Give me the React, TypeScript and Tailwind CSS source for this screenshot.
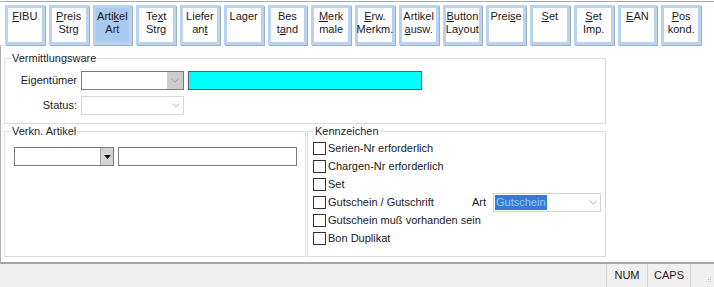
import React from 'react'

interface ToolButton {
  lines: React.ReactNode[]
  active?: boolean
}

const U = ({ c }: { c: string }) => <span className="underline underline-offset-[1px]">{c}</span>

const buttons: ToolButton[] = [
  { lines: [<><U c="F" />IBU</>] },
  { lines: [<><U c="P" />reis</>, 'Strg'] },
  { lines: [<>Arti<U c="k" />el</>, 'Art'], active: true },
  { lines: [<>Te<U c="x" />t</>, 'Strg'] },
  { lines: ['Liefer', <>an<U c="t" /></>] },
  { lines: ['Lager'] },
  { lines: ['Bes', <>t<U c="a" />nd</>] },
  { lines: [<><U c="M" />erk</>, 'male'] },
  { lines: [<><U c="E" />rw.</>, 'Merkm.'] },
  { lines: ['Artikel', <><U c="a" />usw.</>] },
  { lines: [<><U c="B" />utton</>, 'Layout'] },
  { lines: [<>Prei<U c="s" />e</>] },
  { lines: [<><U c="S" />et</>] },
  { lines: [<><U c="S" />et</>, 'Imp.'] },
  { lines: [<><U c="E" />AN</>] },
  { lines: [<><U c="P" />os</>, 'kond.'] },
]

const Chevron = ({ color }: { color: string }) => (
  <svg width="8" height="5" viewBox="0 0 8 5">
    <path d="M0.5 0.5 L4 4 L7.5 0.5" fill="none" stroke={color} strokeWidth="1" />
  </svg>
)

const GroupBox = ({ title, className, children }: { title: string; className: string; children?: React.ReactNode }) => (
  <div className={`relative border border-[#dcdcdc] ${className}`}>
    <span className="absolute -top-[8px] left-[6px] bg-white px-[1px] leading-[14px] text-[#1e1e1e]">{title}</span>
    {children}
  </div>
)

const checks = [
  'Serien-Nr erforderlich',
  'Chargen-Nr erforderlich',
  'Set',
  'Gutschein / Gutschrift',
  'Gutschein muß vorhanden sein',
  'Bon Duplikat',
]

const App = () => {
  return (
    <div className="w-[714px] h-[287px] bg-white flex flex-col text-[11px] text-[#1a1a1a] font-['Liberation_Sans',Arial,sans-serif] overflow-hidden">
      <div className="mt-[1px] border-t border-[#a8a8a8]" />
      <div className="w-[701px] pl-[5px] pt-[3px] grid grid-cols-[repeat(16,minmax(0,1fr))] gap-[4px]">
        {buttons.map((b, i) => (
          <div
            key={i}
            className={`h-[40px] border-[3px] border-[#b7d3f1] shadow-[1px_1px_0_#9fb1c5] flex flex-col items-center pt-[2px] leading-[13px] text-[11px] ${b.active ? 'bg-[#a9c9ee]' : 'bg-white'}`}
          >
            {b.lines.map((l, j) => (
              <span key={j}>{l}</span>
            ))}
          </div>
        ))}
      </div>

      <div className="flex-1 border-l border-[#b0b0b0] pl-[3px] pt-[13px]">
        <GroupBox title="Vermittlungsware" className="w-[602px] h-[66px] pt-[12px]">
          <div className="flex items-center h-[19px]">
            <span className="w-[72px] text-right">Eigentümer</span>
            <div className="ml-[4px] w-[103px] h-[19px] border border-[#7a7a7a] flex bg-white">
              <div className="flex-1" />
              <div className="w-[16px] bg-[#cccccc] flex items-center justify-center">
                <Chevron color="#a8a8a8" />
              </div>
            </div>
            <div className="ml-[4px] w-[234px] h-[19px] border border-[#5f5f5f] bg-[#00ffff]" />
          </div>
          <div className="flex items-center h-[19px] mt-[6px]">
            <span className="w-[72px] text-right">Status:</span>
            <div className="ml-[4px] w-[103px] h-[19px] border border-[#d9d9d9] flex items-center justify-end pr-[3px]">
              <Chevron color="#b5b5b5" />
            </div>
          </div>
        </GroupBox>

        <div className="flex gap-[1px] mt-[7px]">
          <GroupBox title="Verkn. Artikel" className="w-[302px] h-[126px] pt-[15px] pl-[9px]">
            <div className="flex gap-[4px]">
              <div className="w-[100px] h-[19px] border border-[#7a7a7a] flex bg-white">
                <div className="flex-1" />
                <div className="w-[13px] bg-[#d4d4d4] border-l border-[#a0a0a0] flex items-center justify-center">
                  <svg width="7" height="4" viewBox="0 0 7 4">
                    <path d="M0 0 H7 L3.5 4 Z" fill="#111" />
                  </svg>
                </div>
              </div>
              <div className="w-[179px] h-[19px] border border-[#7a7a7a] bg-white" />
            </div>
          </GroupBox>

          <GroupBox title="Kennzeichen" className="w-[299px] h-[126px] pt-[7px] pl-[5px]">
            <div className="flex flex-col">
              {checks.map((c, i) => (
                <div key={i} className="h-[18px] flex items-center">
                  <div className={`flex items-center ${i === 3 ? 'w-[159px]' : ''}`}>
                    <div className="w-[13px] h-[13px] border border-[#333333] bg-white" />
                    <span className="ml-[2px]">{c}</span>
                  </div>
                  {i === 3 && (
                    <>
                      <span className="w-[21px]">Art</span>
                      <div className="w-[108px] h-[19px] border border-[#d4d4d4] flex items-center pl-[1px] pr-[3px]">
                        <span className="bg-[#2f7fd8] text-[#9cc3ee] px-[1px] leading-[15px]">Gutschein</span>
                        <div className="flex-1" />
                        <Chevron color="#b5b5b5" />
                      </div>
                    </>
                  )}
                </div>
              ))}
            </div>
          </GroupBox>
        </div>
      </div>

      <div className="h-[25px] border-t-2 border-[#a6a6a6] bg-[#f0f0f0] flex">
        <div className="flex-1" />
        <div className="w-[41px] border-l border-[#d6d6d6] flex items-center justify-center">NUM</div>
        <div className="w-[43px] border-l border-[#d6d6d6] flex items-center justify-center">CAPS</div>
        <div className="w-[24px] border-l border-[#d6d6d6] flex items-end justify-end p-[2px]">
          <svg width="10" height="10" viewBox="0 0 10 10">
            <g fill="#c4c4c4">
              <rect x="8" y="2" width="1" height="1" />
              <rect x="6" y="4" width="1" height="1" />
              <rect x="8" y="4" width="1" height="1" />
              <rect x="4" y="6" width="1" height="1" />
              <rect x="6" y="6" width="1" height="1" />
              <rect x="8" y="6" width="1" height="1" />
            </g>
          </svg>
        </div>
      </div>
    </div>
  )
}

export default App
